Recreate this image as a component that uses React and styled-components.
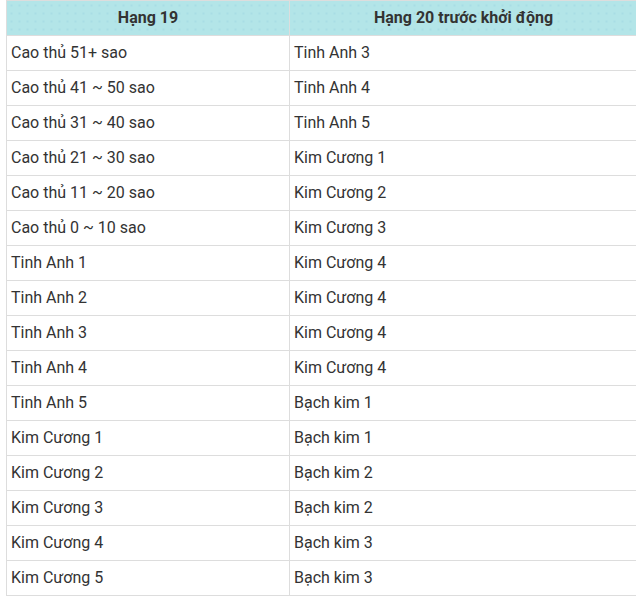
import { createGlobalStyle, styled } from "styled-components";

const GlobalStyle = createGlobalStyle`
  html, body {
    margin: 0;
    padding: 0;
    background: #fff;
  }
  body {
    font-family: Roboto, "Noto Sans", Arial, sans-serif;
    color: #333;
  }
`;

const Wrap = styled.div`
  padding-left: 6px;
`;

const Table = styled.table`
  width: 632px;
  border-collapse: collapse;
  table-layout: fixed;
  font-size: 16px;
`;

const HeadCell = styled.th`
  height: 35px;
  padding: 0 5px 1px;
  box-sizing: border-box;
  background-color: #b3e5e8;
  background-image: radial-gradient(rgba(140, 200, 220, 0.6) 0.6px, transparent 0.8px);
  background-size: 8px 8px;
  border: 1px solid #ddd;
  font-weight: 700;
  text-align: center;
  color: #333;
`;

const Cell = styled.td`
  height: 35px;
  padding: 0 4px 1px;
  box-sizing: border-box;
  border: 1px solid #ddd;
  text-align: left;
  color: #333;
`;

const rows = [
  ["Cao thủ 51+ sao", "Tinh Anh 3"],
  ["Cao thủ 41 ~ 50 sao", "Tinh Anh 4"],
  ["Cao thủ 31 ~ 40 sao", "Tinh Anh 5"],
  ["Cao thủ 21 ~ 30 sao", "Kim Cương 1"],
  ["Cao thủ 11 ~ 20 sao", "Kim Cương 2"],
  ["Cao thủ 0 ~ 10 sao", "Kim Cương 3"],
  ["Tinh Anh 1", "Kim Cương 4"],
  ["Tinh Anh 2", "Kim Cương 4"],
  ["Tinh Anh 3", "Kim Cương 4"],
  ["Tinh Anh 4", "Kim Cương 4"],
  ["Tinh Anh 5", "Bạch kim 1"],
  ["Kim Cương 1", "Bạch kim 1"],
  ["Kim Cương 2", "Bạch kim 2"],
  ["Kim Cương 3", "Bạch kim 2"],
  ["Kim Cương 4", "Bạch kim 3"],
  ["Kim Cương 5", "Bạch kim 3"],
];

const App = () => {
  return (
    <Wrap>
      <GlobalStyle />
      <Table>
        <colgroup>
          <col style={{ width: 283 }} />
          <col />
        </colgroup>
        <thead>
          <tr>
            <HeadCell>Hạng 19</HeadCell>
            <HeadCell>Hạng 20 trước khởi động</HeadCell>
          </tr>
        </thead>
        <tbody>
          {rows.map(([a, b], i) => (
            <tr key={i}>
              <Cell>{a}</Cell>
              <Cell>{b}</Cell>
            </tr>
          ))}
        </tbody>
      </Table>
    </Wrap>
  );
};

export default App;
